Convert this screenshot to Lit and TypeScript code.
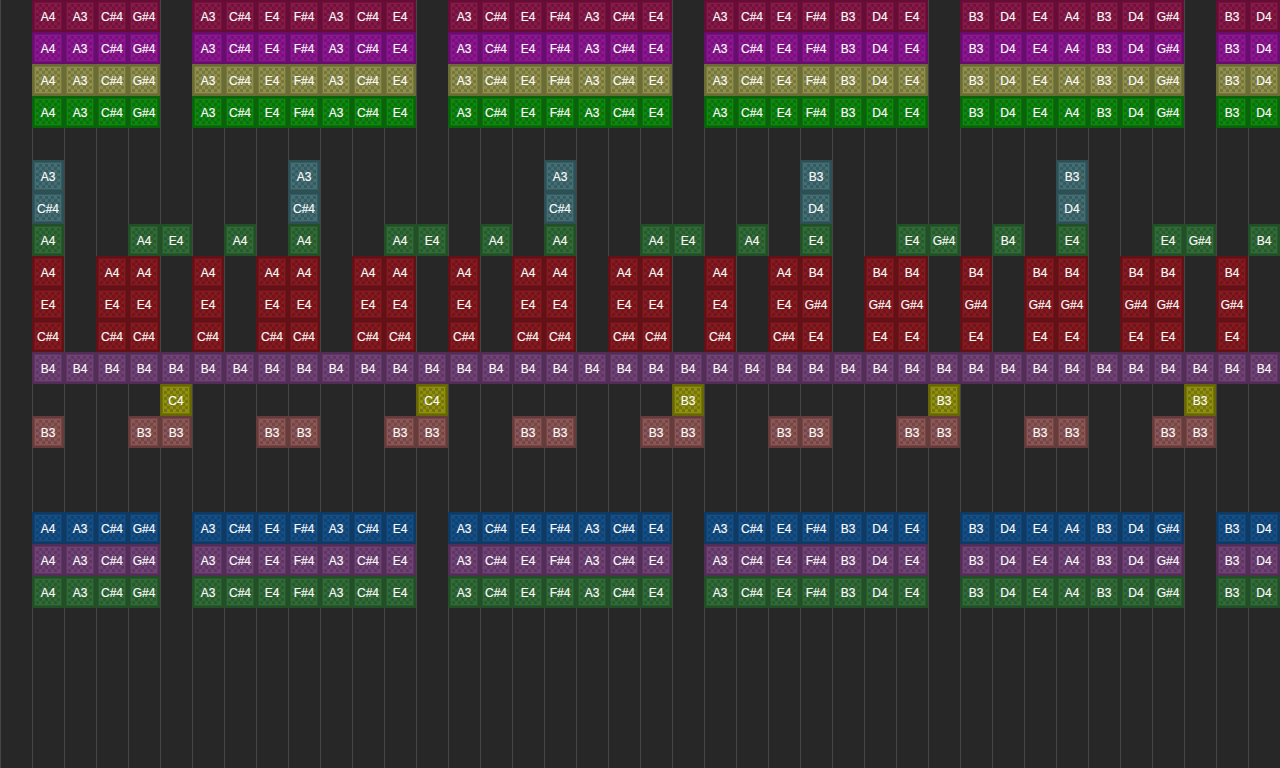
import { LitElement, html, css } from "lit";
import { customElement } from "lit/decorators.js";

const phrase: [number, string[]][] = [
  [1, ["A4", "A3", "C#4", "G#4"]],
  [6, ["A3", "C#4", "E4", "F#4", "A3", "C#4", "E4"]],
  [14, ["A3", "C#4", "E4", "F#4", "A3", "C#4", "E4"]],
  [22, ["A3", "C#4", "E4", "F#4", "B3", "D4", "E4"]],
  [30, ["B3", "D4", "E4", "A4", "B3", "D4", "G#4"]],
  [38, ["B3", "D4"]],
];
const melody: [number, string][] = phrase.flatMap(([s, ns]) =>
  ns.map((n, i) => [s + i, n] as [number, string])
);
const pick = (cols: number[], fn: (c: number) => string): [number, string][] =>
  cols.map((c) => [c, fn(c)]);

const chordCols = [1, 3, 4, 6, 8, 9, 11, 12, 14, 16, 17, 19, 20, 22, 24, 25, 27, 28, 30, 32, 33, 35, 36, 38];
const all = Array.from({ length: 39 }, (_, i) => i + 1);

const rows: { row: number; tone: string; notes: [number, string][] }[] = [
  { row: 1, tone: "crimson", notes: melody },
  { row: 2, tone: "magenta", notes: melody },
  { row: 3, tone: "khaki", notes: melody },
  { row: 4, tone: "lime", notes: melody },
  { row: 6, tone: "teal", notes: pick([1, 9, 17, 25, 33], (c) => (c < 25 ? "A3" : "B3")) },
  { row: 7, tone: "teal", notes: pick([1, 9, 17, 25, 33], (c) => (c < 25 ? "C#4" : "D4")) },
  {
    row: 8,
    tone: "forest",
    notes: [
      [1, "A4"], [4, "A4"], [5, "E4"], [7, "A4"], [9, "A4"], [12, "A4"], [13, "E4"],
      [15, "A4"], [17, "A4"], [20, "A4"], [21, "E4"], [23, "A4"], [25, "E4"], [28, "E4"],
      [29, "G#4"], [31, "B4"], [33, "E4"], [36, "E4"], [37, "G#4"], [39, "B4"],
    ],
  },
  { row: 9, tone: "red", notes: pick(chordCols, (c) => (c < 25 ? "A4" : "B4")) },
  { row: 10, tone: "red", notes: pick(chordCols, (c) => (c < 25 ? "E4" : "G#4")) },
  { row: 11, tone: "red", notes: pick(chordCols, (c) => (c < 25 ? "C#4" : "E4")) },
  { row: 12, tone: "plum", notes: pick(all, () => "B4") },
  { row: 13, tone: "olive", notes: pick([5, 13, 21, 29, 37], (c) => (c < 21 ? "C4" : "B3")) },
  { row: 14, tone: "rose", notes: pick([1, 4, 5, 8, 9, 12, 13, 16, 17, 20, 21, 24, 25, 28, 29, 32, 33, 36, 37], () => "B3") },
  { row: 17, tone: "blue", notes: melody },
  { row: 18, tone: "plum", notes: melody },
  { row: 19, tone: "forest", notes: melody },
];

@customElement("app-root")
export class AppRoot extends LitElement {
  static styles = css`
    :host {
      display: block;
      width: 1280px;
      height: 768px;
      overflow: hidden;
    }
    .roll {
      display: grid;
      grid-template-columns: repeat(40, 32px);
      grid-template-rows: repeat(24, 32px);
      width: 1280px;
      height: 768px;
      background-color: #272727;
      background-image: linear-gradient(to right, #464646 1px, transparent 1px);
      background-size: 32px 32px;
      font-family: "Liberation Sans", Arial, sans-serif;
    }
    .note {
      position: relative;
      display: flex;
      align-items: center;
      justify-content: center;
      padding-top: 2px;
      box-sizing: border-box;
      background: var(--fill);
      box-shadow: inset 0 0 0 2px var(--edge), inset 0 0 0 3px var(--dot);
      color: #fafafa;
      font-size: 12px;
      line-height: 14px;
      -webkit-text-stroke: 0.15px #ffffff;
    }
    .note::before {
      content: "";
      position: absolute;
      inset: 4px;
      background-image: repeating-conic-gradient(var(--dot) 0 25%, transparent 0 50%);
      background-size: 6px 6px;
    }
    .note span {
      position: relative;
    }
    .crimson { --edge: #650d35; --fill: #881a48; --dot: #70123c; }
    .magenta { --edge: #660d6d; --fill: #8e1791; --dot: #76117b; }
    .khaki { --edge: #6b6b35; --fill: #8f8f4d; --dot: #76763d; }
    .lime { --edge: #0a620a; --fill: #0f880f; --dot: #0b700b; }
    .teal { --edge: #2e5055; --fill: #426e74; --dot: #355a60; }
    .forest { --edge: #224e28; --fill: #316c38; --dot: #27592d; }
    .red { --edge: #621116; --fill: #871a20; --dot: #6f1418; }
    .plum { --edge: #522e57; --fill: #714276; --dot: #5d3663; }
    .olive { --edge: #666606; --fill: #8e8e10; --dot: #757509; }
    .rose { --edge: #653b3b; --fill: #8c5656; --dot: #744747; }
    .blue { --edge: #0e3a63; --fill: #145088; --dot: #104171; }
  `;

  render() {
    return html`<div class="roll">
      ${rows.map((r) =>
        r.notes.map(
          ([c, n]) => html`<div
            class="note ${r.tone}"
            style="grid-row:${r.row};grid-column:${c + 1}"
          ><span>${n}</span></div>`
        )
      )}
    </div>`;
  }
}
